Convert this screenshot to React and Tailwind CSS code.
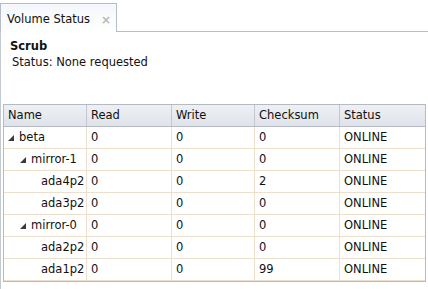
import React from 'react';

const rows = [
  { name: 'beta', level: 0, toggle: true, read: 0, write: 0, checksum: 0, status: 'ONLINE' },
  { name: 'mirror-1', level: 1, toggle: true, read: 0, write: 0, checksum: 0, status: 'ONLINE' },
  { name: 'ada4p2', level: 2, toggle: false, read: 0, write: 0, checksum: 2, status: 'ONLINE' },
  { name: 'ada3p2', level: 2, toggle: false, read: 0, write: 0, checksum: 0, status: 'ONLINE' },
  { name: 'mirror-0', level: 1, toggle: true, read: 0, write: 0, checksum: 0, status: 'ONLINE' },
  { name: 'ada2p2', level: 2, toggle: false, read: 0, write: 0, checksum: 0, status: 'ONLINE' },
  { name: 'ada1p2', level: 2, toggle: false, read: 0, write: 0, checksum: 99, status: 'ONLINE' },
];

const indent = ['pl-[4px]', 'pl-[16px]', 'pl-[26px]'];

function Expander() {
  return (
    <svg width="6" height="6" viewBox="0 0 6 6" className="mr-[5px] shrink-0">
      <polygon points="6,0 6,6 0,6" fill="#3a3a3a" />
    </svg>
  );
}

export default function App() {
  return (
    <div
      className="w-[428px] h-[289px] bg-white flex flex-col overflow-hidden text-[11.5px] text-[#111]"
      style={{ fontFamily: '"DejaVu Sans", Verdana, sans-serif' }}
    >
      {/* Onglet */}
      <div className="flex items-end h-[32px] shrink-0">
        <div className="w-[117px] h-[29px] border border-b-0 border-[#b6bcc8] bg-gradient-to-b from-[#f4f7fb] to-white flex items-center pl-[6px] pr-[5px] pt-[3px]">
          <span>Volume Status</span>
          <span className="ml-auto text-[#b8b8b8] text-[12px] font-bold leading-none">×</span>
        </div>
        <div className="flex-1 border-b border-[#b6bcc8]" />
      </div>

      {/* Contenu */}
      <div className="flex-1 border-l border-[#c4c8d0] pl-[9px] pr-[2px] pt-[7px]">
        <div className="font-bold leading-[15px]">Scrub</div>
        <div className="pl-[2px] leading-[15px] mt-[1px]">Status: None requested</div>

        <div className="ml-[-7px] mt-[34px] w-[423px] border border-[#b4bac5]">
          <div className="grid grid-cols-[83px_85px_83px_85px_1fr] h-[22px] bg-gradient-to-b from-[#eef0f4] to-[#dfe3ea] border-b border-[#b4bac5]">
            {['Name', 'Read', 'Write', 'Checksum', 'Status'].map((h, i) => (
              <div
                key={h}
                className={`flex items-center pl-[4px] ${i < 4 ? 'border-r border-[#c3c8d1]' : ''}`}
              >
                {h}
              </div>
            ))}
          </div>
          {rows.map(r => (
            <div
              key={r.name}
              className="grid grid-cols-[83px_85px_83px_85px_1fr] h-[22px] border-b border-[#eddfcb]"
            >
              <div className={`flex items-center border-r border-[#eddfcb] ${indent[r.level]}`}>
                {r.toggle ? <Expander /> : <span className="w-[11px]" />}
                <span>{r.name}</span>
              </div>
              <div className="flex items-center pl-[4px] border-r border-[#eddfcb]">{r.read}</div>
              <div className="flex items-center pl-[4px] border-r border-[#eddfcb]">{r.write}</div>
              <div className="flex items-center pl-[4px] border-r border-[#eddfcb]">{r.checksum}</div>
              <div className="flex items-center pl-[4px]">{r.status}</div>
            </div>
          ))}
        </div>
      </div>
    </div>
  );
}
